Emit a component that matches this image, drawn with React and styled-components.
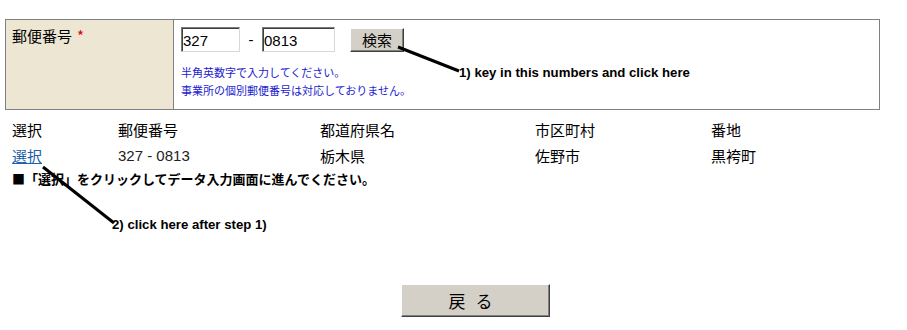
import React from "react";
import styled, { createGlobalStyle } from "styled-components";

const Global = createGlobalStyle`
  html, body { margin: 0; padding: 0; background: #fff; }
  body { font-family: "Noto Sans CJK JP", "Liberation Sans", sans-serif; color: #000; }
`;

const Page = styled.div`
  position: relative;
  width: 907px;
  height: 330px;
  padding: 19px 0 0 5px;
  box-sizing: border-box;
  overflow: hidden;
`;

const FormBox = styled.div`
  display: flex;
  width: 875px;
  height: 91px;
  box-sizing: border-box;
  border: 1px solid #808080;
`;

const LabelCell = styled.div`
  width: 168px;
  background: #ece6d2;
  border-right: 1px solid #808080;
  padding: 5px 0 0 6px;
  box-sizing: border-box;
  font-size: 15px;
  line-height: 22px;
`;

const Req = styled.span`
  color: #e00000;
  margin-left: 5px;
`;

const FieldCell = styled.div`
  flex: 1;
  padding: 7px 0 0 7px;
  display: flex;
  flex-direction: column;
`;

const InputRow = styled.div`
  display: flex;
  align-items: center;
  height: 25px;
`;

const ZipInput = styled.input`
  width: ${(p) => p.$w}px;
  height: 25px;
  box-sizing: border-box;
  border-style: solid;
  border-width: 1px;
  border-color: #7a7a7a #d8d8d8 #d8d8d8 #7a7a7a;
  box-shadow: inset 1px 1px 0 #404040;
  padding: 2px 1px 0;
  font-family: "Liberation Sans", sans-serif;
  font-size: 15px;
  color: #000;
  outline: none;
`;

const Dash = styled.span`
  width: 22px;
  text-align: center;
  font-family: "Liberation Sans", sans-serif;
  font-size: 15px;
`;

const WinButton = styled.button`
  height: ${(p) => p.$h}px;
  width: ${(p) => p.$w}px;
  margin-left: ${(p) => p.$ml || 0}px;
  background: #d4d0c8;
  border-style: solid;
  border-width: 1px;
  border-color: #ffffff #404040 #404040 #ffffff;
  box-shadow: inset -1px -1px 0 #808080;
  font-family: "Noto Sans CJK JP", sans-serif;
  font-size: ${(p) => p.$fs}px;
  letter-spacing: ${(p) => p.$ls || 0}px;
  color: #000;
  padding: 0;
  display: flex;
  align-items: center;
  justify-content: center;
`;

const Help = styled.div`
  margin-top: 11px;
  font-size: 11px;
  line-height: 18px;
  color: #1a1ad0;
`;

const Results = styled.div`
  margin: 6px 0 0 7px;
`;

const Row = styled.div`
  display: grid;
  grid-template-columns: 106px 202px 215px 176px 1fr;
  font-size: 15px;
  height: 26px;
  align-items: center;
`;

const Mono = styled.span`
  font-family: "Liberation Sans", sans-serif;
  font-size: 15px;
  color: #222;
`;

const Pick = styled.a`
  color: #2060a8;
  text-decoration: underline;
  cursor: pointer;
`;

const Notice = styled.div`
  font-size: 13px;
  font-weight: bold;
  line-height: 24px;
  margin-top: -1px;
`;

const Footer = styled.div`
  padding: 93px 0 0 396px;
`;

const Note = styled.div`
  position: absolute;
  left: ${(p) => p.$x}px;
  top: ${(p) => p.$y}px;
  font-family: "Liberation Sans", Arial, sans-serif;
  font-weight: bold;
  font-size: 13.2px;
  line-height: 14px;
  white-space: nowrap;
`;

const Overlay = styled.svg`
  position: absolute;
  left: 0;
  top: 0;
  pointer-events: none;
`;

export default function App() {
  return (
    <>
      <Global />
      <Page>
        <FormBox>
          <LabelCell>
            郵便番号<Req>*</Req>
          </LabelCell>
          <FieldCell>
            <InputRow>
              <ZipInput $w={59} defaultValue="327" />
              <Dash>-</Dash>
              <ZipInput $w={73} defaultValue="0813" />
              <WinButton $w={54} $h={24} $fs={15} $ml={15}>
                検索
              </WinButton>
            </InputRow>
            <Help>
              半角英数字で入力してください。
              <br />
              事業所の個別郵便番号は対応しておりません。
            </Help>
          </FieldCell>
        </FormBox>
        <Results>
          <Row>
            <span>選択</span>
            <span>郵便番号</span>
            <span>都道府県名</span>
            <span>市区町村</span>
            <span>番地</span>
          </Row>
          <Row>
            <span>
              <Pick>選択</Pick>
            </span>
            <Mono>327 - 0813</Mono>
            <span>栃木県</span>
            <span>佐野市</span>
            <span>黒袴町</span>
          </Row>
          <Notice>■「選択」をクリックしてデータ入力画面に進んでください。</Notice>
        </Results>
        <Footer>
          <WinButton $w={149} $h={33} $fs={17} $ls={10}>
            戻る
          </WinButton>
        </Footer>
        <Overlay width="907" height="330" viewBox="0 0 907 330">
          <line x1="398" y1="47" x2="459" y2="71" stroke="#000" strokeWidth="3" />
          <line x1="43" y1="167" x2="114" y2="223" stroke="#000" strokeWidth="3" />
        </Overlay>
        <Note $x={459} $y={66}>1) key in this numbers and click here</Note>
        <Note $x={112} $y={218}>2) click here after step 1)</Note>
      </Page>
    </>
  );
}
